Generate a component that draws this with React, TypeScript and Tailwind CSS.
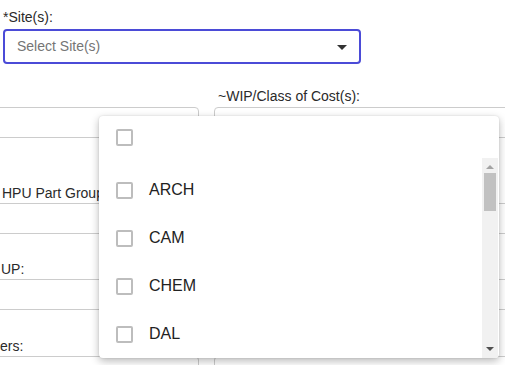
const font = { fontFamily: '"Liberation Sans", Arial, sans-serif' }

const sites = ["ARCH", "CAM", "CHEM", "DAL"]

function Box() {
  return <span className="block h-[17px] w-[17px] shrink-0 rounded-[2px] border-2 border-[#bdbdbd] bg-white" />
}

function Field({ className }: { className?: string }) {
  return <div className={`h-[31px] rounded-[4px] border border-[#cccccc] bg-white ${className ?? ""}`} />
}

export default function App() {
  return (
    <div className="relative h-[365px] w-[505px] overflow-hidden bg-white text-[#2a2a2a]" style={font}>
      {/* Site picker */}
      <div className="pl-[3px] pt-[9px]">
        <div className="text-[14px] leading-[16px]">*Site(s):</div>
        <div className="mt-[4px] flex h-[35px] w-[358px] items-center justify-between rounded-[4px] border-2 border-[#4b4bd7] pl-[12px] pr-[12px]">
          <span className="text-[14px] text-[#757575]">Select Site(s)</span>
          <svg width="10" height="5" viewBox="0 0 10 5" className="mt-[1px]">
            <path d="M0 0h10L5 5z" fill="#333" />
          </svg>
        </div>
      </div>

      {/* Filter grid */}
      <div className="mt-[24px] grid grid-cols-[199px_1fr] gap-x-[15px]">
        <div className="-ml-[16px] flex flex-col">
          <div className="h-[16px]" />
          <Field className="mt-[3px]" />
          <div className="mt-[47px] pl-[18px] text-[14px] leading-[16px]">HPU Part Group(s):</div>
          <Field className="mt-[2px]" />
          <div className="mt-[27px] pl-[17px] text-[14px] leading-[16px]">UP:</div>
          <Field className="mt-[2px]" />
          <div className="mt-[28px] pl-[16px] text-[14px] leading-[16px]">ers:</div>
          <Field className="mt-[2px]" />
        </div>
        <div className="flex flex-col">
          <div className="pl-[4px] text-[14px] leading-[16px]">~WIP/Class of Cost(s):</div>
          <Field className="mt-[3px] w-[320px]" />
          <div className="mt-[47px] h-[16px]" />
          <Field className="mt-[2px] w-[320px]" />
          <div className="mt-[27px] h-[16px]" />
          <Field className="mt-[2px] w-[320px]" />
          <div className="mt-[28px] h-[16px]" />
          <Field className="mt-[2px] w-[320px]" />
        </div>
      </div>

      {/* Dropdown menu */}
      <div className="absolute left-[99px] top-[116px] flex h-[242px] w-[400px] flex-col overflow-hidden rounded-[4px] bg-white shadow-[0_3px_8px_rgba(0,0,0,0.28),0_0_2px_rgba(0,0,0,0.12)]">
        <div className="flex h-[42px] shrink-0 items-center pl-[17px]">
          <Box />
        </div>
        <div className="flex min-h-0 flex-1">
          <ul className="flex-1 overflow-hidden pt-[8px]">
            {sites.map((s) => (
              <li key={s} className="flex h-[48px] items-center gap-[16px] pl-[17px] text-[16px] text-[#222]">
                <Box />
                <span>{s}</span>
              </li>
            ))}
          </ul>
          <div className="mr-[1px] flex w-[16px] flex-col items-center bg-[#f1f1f1]">
            <svg width="8" height="4" viewBox="0 0 8 4" className="mt-[7px]">
              <path d="M0 4h8L4 0z" fill="#a3a3a3" />
            </svg>
            <div className="mt-[4px] h-[38px] w-[12px] bg-[#c1c1c1]" />
            <div className="flex-1" />
            <svg width="8" height="4" viewBox="0 0 8 4" className="mb-[7px]">
              <path d="M0 0h8L4 4z" fill="#505050" />
            </svg>
          </div>
        </div>
      </div>
    </div>
  )
}
